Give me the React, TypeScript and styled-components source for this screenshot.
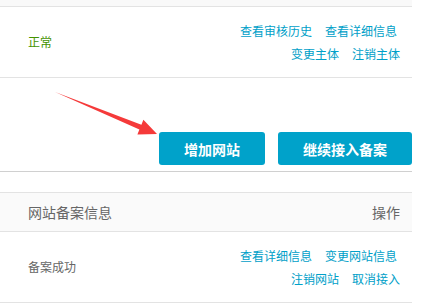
import React from "react";
import styled, { createGlobalStyle } from "styled-components";

const Global = createGlobalStyle`
  html, body { margin: 0; padding: 0; background: #fff; }
  body { font-family: "Noto Sans CJK SC", "Noto Sans", sans-serif; }
`;

const Page = styled.div`
  position: relative;
  width: 412px;
`;

const TopStrip = styled.div`
  height: 6px;
  background: #f9f9f9;
  border-bottom: 1px solid #e3e3e3;
`;

const Row = styled.div`
  height: 70px;
  display: flex;
  align-items: center;
  justify-content: space-between;
  padding: 0 12px 0 28px;
  border-bottom: 1px solid #e3e3e3;
`;

const Status = styled.span<{ $color: string }>`
  font-size: 12px;
  color: ${(p) => p.$color};
  line-height: 1;
`;

const Actions = styled.div`
  display: flex;
  flex-direction: column;
  align-items: flex-end;
  gap: 11px;
`;

const ActionLine = styled.div<{ $pr?: number }>`
  display: flex;
  gap: 13px;
  padding-right: ${(p) => p.$pr ?? 0}px;
  line-height: 12px;
`;

const Link = styled.a`
  font-size: 12px;
  color: #00a0c8;
  text-decoration: none;
  cursor: pointer;
`;

const ButtonBar = styled.div`
  height: 94px;
  box-sizing: border-box;
  display: flex;
  justify-content: flex-end;
  align-items: flex-end;
  gap: 13px;
  padding-bottom: 6px;
  border-bottom: 1px solid #d0d0d0;
`;

const Button = styled.button<{ $w: number }>`
  width: ${(p) => p.$w}px;
  height: 33px;
  border: none;
  border-radius: 3px;
  background: #00a2ca;
  color: #fff;
  font-family: inherit;
  font-size: 14px;
  font-weight: 700;
  padding: 0;
  cursor: pointer;
`;

const TableHeader = styled.div`
  margin-top: 20px;
  height: 38px;
  display: flex;
  align-items: center;
  justify-content: space-between;
  padding: 0 12px 0 28px;
  background: #fafafa;
  border-top: 1px solid #e3e3e3;
  border-bottom: 1px solid #e3e3e3;
  font-size: 14px;
  color: #666;
`;

const Arrow = styled.svg`
  position: absolute;
  left: 0;
  top: 0;
  pointer-events: none;
`;

export default function App() {
  return (
    <>
      <Global />
      <Page>
        <TopStrip />
        <Row>
          <Status $color="#449300">正常</Status>
          <Actions>
            <ActionLine $pr={3}>
              <Link>查看审核历史</Link>
              <Link>查看详细信息</Link>
            </ActionLine>
            <ActionLine>
              <Link>变更主体</Link>
              <Link>注销主体</Link>
            </ActionLine>
          </Actions>
        </Row>
        <ButtonBar>
          <Button $w={106}>增加网站</Button>
          <Button $w={134}>继续接入备案</Button>
        </ButtonBar>
        <TableHeader>
          <span>网站备案信息</span>
          <span>操作</span>
        </TableHeader>
        <Row>
          <Status $color="#666">备案成功</Status>
          <Actions>
            <ActionLine $pr={3}>
              <Link>查看详细信息</Link>
              <Link>变更网站信息</Link>
            </ActionLine>
            <ActionLine>
              <Link>注销网站</Link>
              <Link>取消接入</Link>
            </ActionLine>
          </Actions>
        </Row>
        <Arrow width="424" height="304" viewBox="0 0 424 304">
          <polygon
            points="55,92 141.4,124.8 143.4,119.7 157,134 137.4,134.5 139.4,129.4"
            fill="#f53a3a"
          />
        </Arrow>
      </Page>
    </>
  );
}
